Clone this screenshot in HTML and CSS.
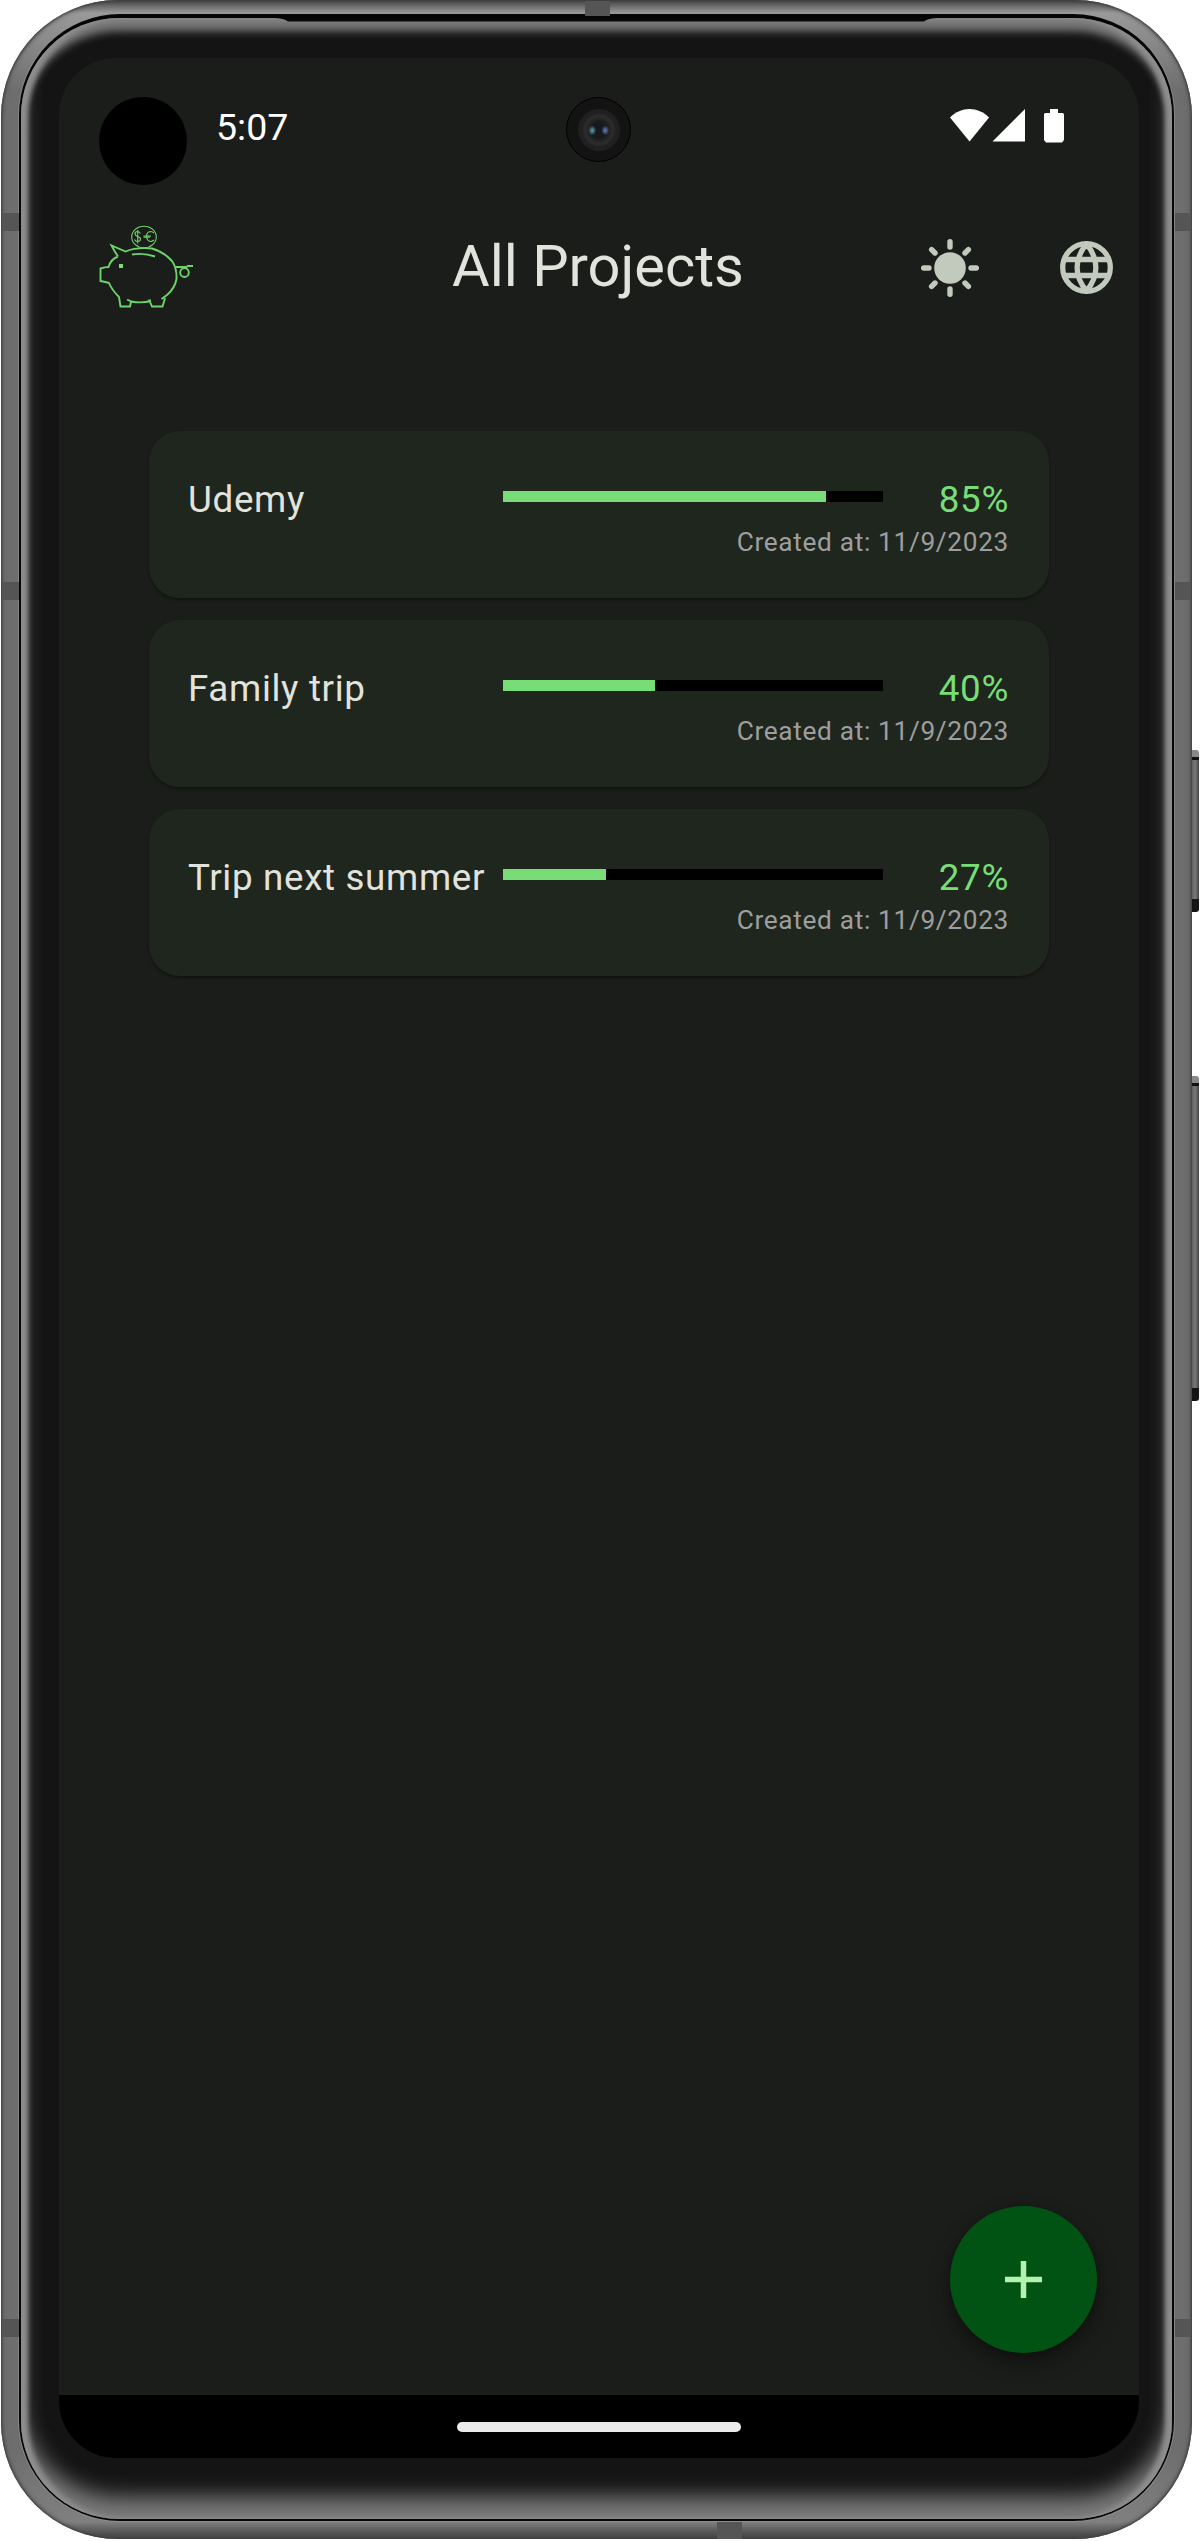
FILE: index.html
```html
<!DOCTYPE html>
<html lang="en">
<head>
<meta charset="utf-8">
<title>All Projects</title>
<link rel="stylesheet" href="styles.css">
</head>
<body>
<div class="phone">
  <i class="side-button power"></i>
  <i class="side-button volume"></i>
  <div class="frame">
    <i class="band band-left b1"></i><i class="band band-left b2"></i><i class="band band-left b3"></i>
    <i class="band band-right b1"></i><i class="band band-right b2"></i><i class="band band-right b3"></i>
    <i class="band band-top"></i><i class="band band-bottom"></i>
    <div class="seam">
      <div class="glass">
        <svg class="speaker" viewBox="0 0 664 4"><path d="M0 0H664Q654 0 650 3.500H14Q10 0 0 0Z"/></svg>
        <main class="screen">
          <header class="status">
            <span class="cutout"></span>
            <time class="clock">5:07</time>
            <span class="camera"><i class="lens"></i></span>
            <svg class="signals" viewBox="0 0 116 36">
              <path d="M1 9.5C12-2 29-2 40 9.5L20.500 33.500Z"/>
              <path d="M43.500 33.500L76 1V33.500Z"/>
              <path d="M101 1h8v4h4.500q1.500 0 1.500 1.500V32l-2 2.500H97L95 32V6.500Q95 5 96.500 5H101Z"/>
            </svg>
          </header>
          <div class="appbar">
            <svg class="logo" viewBox="0 0 96 84">
              <g class="thin">
                <ellipse cx="46" cy="12" rx="12.300" ry="10.800"/>
                <path d="M42.500 8.500Q41 6.500 39.500 6.500Q37 6.500 37 9Q37 10.500 39.500 11.500Q42.500 12.500 42.500 14Q42.500 16.500 39.500 16.500Q37.500 16.500 36.500 14.500M39.700 5V18.500"/>
                <path d="M56 8Q54.500 6.500 52.500 6.500Q48.500 7 48.500 11.500Q49 16 52.500 16.500Q54.500 16.500 56 15M45.500 11H53M45.500 12.300H52"/>
              </g>
              <path d="M20 31.500L16.500 26L13.500 20.500L27.500 26.500Q38 22 54 23.500Q66 27 74 36Q79 43 78.500 54Q77 63 69 70L63.500 74M67 73Q66 77 64.500 81.500H54L51.500 75.500L53 75.500M29 74.500L33.500 76.500Q43 78.500 53 76M33 77L32 81.500H22.500L21 72Q14 65 11 58Q8 57 2.500 56V43.500Q7 42 10.500 42Q13 34 20 31.500"/>
              <path d="M34 29.500Q46 27.500 57 31.500M77.500 42H88L90 41H95"/>
              <ellipse cx="86.500" cy="47.500" rx="4.300" ry="4.500"/>
              <rect class="eye" x="21" y="39" width="4" height="4"/>
            </svg>
            <h1 class="title">All Projects</h1>
            <div class="actions">
              <svg class="sun" viewBox="0 0 58 58">
                <circle cx="29" cy="29" r="15.800"/>
                <path d="M29 2.700V8M29 50V55.300M2.700 29H8M50 29H55.300M10.600 10.600L14 14M44 44L47.400 47.400M10.600 47.400L14 44M44 14L47.400 10.600"/>
              </svg>
              <svg class="globe" viewBox="0 0 53 53">
                <circle cx="26.500" cy="26.500" r="23.800"/>
                <path d="M5 18.500H48M5 34.500H48M26.500 3C14 18 14 35 26.500 50C39 35 39 18 26.500 3Z"/>
              </svg>
            </div>
          </div>
          <section class="projects">
            <article class="card">
              <div class="row"><span class="name">Udemy</span><div class="bar"><div class="fill" style="width:85%"></div></div><span class="percent">85%</span></div>
              <p class="created">Created at: 11/9/2023</p>
            </article>
            <article class="card">
              <div class="row"><span class="name">Family trip</span><div class="bar"><div class="fill" style="width:40%"></div></div><span class="percent">40%</span></div>
              <p class="created">Created at: 11/9/2023</p>
            </article>
            <article class="card">
              <div class="row"><span class="name">Trip next summer</span><div class="bar"><div class="fill" style="width:27%"></div></div><span class="percent">27%</span></div>
              <p class="created">Created at: 11/9/2023</p>
            </article>
          </section>
          <button class="fab" aria-label="Add project"><svg viewBox="0 0 37 37"><path d="M18.500 0V37M0 18.500H37"/></svg></button>
          <nav class="navbar"><span class="pill"></span></nav>
        </main>
      </div>
    </div>
  </div>
</div>
</body>
</html>
```

FILE: styles.css
```css
* { box-sizing: border-box; }
body { margin: 0; background: #fff; font-family: Roboto, sans-serif; }
svg { display: block; flex: none; }

/* device shell */
.phone { position: relative; width: 1200px; height: 2541px; padding: 0 8px 2px 1px; overflow: hidden; }
.frame {
  position: relative; height: 2539px; padding: 14px 18px 18px 18px; border-radius: 117px;
  background: linear-gradient(#3c3f3d 0, #666 5px, #9a9a9a 13px, #6e6e6e 90px, #6e6e6e calc(100% - 90px), #808080 calc(100% - 17px), #6a6a6a calc(100% - 12px), #3d3d3d 100%);
  box-shadow: inset 0 0 3px 1px #3a3a3a, inset 0 0 7px #5a5a5a;
}
.seam { height: 2507px; padding: 4px 2px 2px; background: #060606; border-radius: 101px; box-shadow: 0 0 0 1px #9998; }
.glass {
  position: relative; height: 2501px; padding: 40px 34px 62px 38px; border-radius: 98px; background: #141414;
  box-shadow: inset 7px 0 5px #8e8e8e, inset -7px 0 5px #8e8e8e, inset 0 13px 8px #7a7a7a, inset 0 -22px 21px #7c7c7c;
}
.speaker { position: absolute; left: 253px; top: 0; width: 664px; height: 4px; fill: #080808; }
.side-button { position: absolute; left: 1191px; width: 8px; border-radius: 0 3px 3px 0; background: linear-gradient(#888 7px, #111 7px 10px, transparent 10px calc(100% - 13px), #151515 calc(100% - 13px)), linear-gradient(90deg, #555, #7a7a7a 4px, #444); }
.power { top: 750px; height: 162px; }
.volume { top: 1076px; height: 325px; }
.band { position: absolute; background: #555; }
.band-left { left: 1px; width: 17px; height: 18px; }
.band-right { right: 1px; width: 16px; height: 18px; }
.b1 { top: 213px; }
.b2 { top: 582px; }
.b3 { top: 2319px; }
.band-top { left: 584px; top: 1px; width: 25px; height: 15px; }
.band-bottom { left: 716px; bottom: 0; width: 25px; height: 17px; }

/* screen */
.screen { position: relative; display: flex; flex-direction: column; width: 1080px; height: 2400px; border-radius: 57px; overflow: hidden; background: #1b1d1a; }
.status { display: flex; align-items: flex-start; height: 164px; padding-left: 40px; }
.cutout { width: 88px; height: 88px; margin-top: 39px; border-radius: 50%; background: #000; }
.clock { width: 221px; margin: 46px 0 0 29px; color: #fff; font-size: 37.500px; line-height: 46px; }
.camera { display: flex; align-items: center; justify-content: center; width: 65px; height: 65px; margin: 39px 0 0 129px; border-radius: 50%; border: 1px solid #000; background: #131313; }
.lens { width: 42px; height: 42px; border-radius: 50%; background: radial-gradient(ellipse 4px 5px at 34% 51%, #58a9ad 0, #58a9ad00 100%), radial-gradient(ellipse 4px 5px at 65% 51%, #6683cf 0, #6683cf00 100%), radial-gradient(circle, #16191e 0 8px, #202020 10px, #2d2d2d 14px, #202020 17px); }
.signals { width: 116px; height: 36px; margin: 50px 0 0 318px; fill: #fff; }

.appbar { display: grid; grid-template-columns: 340px 1fr 340px; align-items: center; height: 92px; }
.logo { width: 96px; height: 84px; margin: 0 0 2px 39px; fill: none; stroke: #6dd36b; stroke-width: 1.900; }
.thin { stroke-width: 1.100; }
.eye { fill: #78dc77; stroke: none; }
.title { margin: 0 2px 5px 0; color: #e2e3dd; font-size: 57.750px; line-height: 74px; font-weight: 400; white-space: nowrap; text-align: center; }
.actions { display: flex; align-items: center; justify-content: flex-end; gap: 81px; padding: 0 26px 1px 0; }
.sun { width: 58px; height: 58px; fill: #c2c9bd; stroke: #c2c9bd; stroke-width: 5.400; stroke-linecap: round; }
.sun circle { stroke: none; }
.globe { width: 53px; height: 53px; fill: none; stroke: #c2c9bd; stroke-width: 5.300; }

.projects { display: flex; flex-direction: column; gap: 22px; padding: 117px 90px 0 90px; }
.card { height: 167px; padding: 43px 40px 0 39px; border-radius: 31px; background: #1f261e; box-shadow: 0 2px 3px #0005; }
.row { display: grid; grid-template-columns: 315px 380px 1fr; height: 50px; color: #e2e3dd; font-size: 36.750px; line-height: 52px; letter-spacing: .66px; white-space: nowrap; }
.bar { height: 11px; margin-top: 17px; background: #000; }
.fill { height: 100%; background: #78dc77; }
.percent { color: #78dc77; text-align: right; }
.created { margin: 0; color: #9e9e9e; font-size: 26.250px; line-height: 36px; letter-spacing: .66px; text-align: right; }

.fab { position: absolute; left: 891px; top: 2148px; display: flex; align-items: center; justify-content: center; width: 147px; height: 147px; padding: 0; border: 0; border-radius: 50%; background: #005313; box-shadow: 0 10px 22px #0005, 0 3px 8px #0003; }
.fab svg { width: 37px; height: 37px; stroke: #b3f2ae; stroke-width: 5.500; }
.navbar { display: flex; justify-content: center; align-items: center; height: 63px; margin-top: auto; background: #000; }
.pill { width: 284px; height: 10px; border-radius: 5px; background: #ebebeb; }
```
